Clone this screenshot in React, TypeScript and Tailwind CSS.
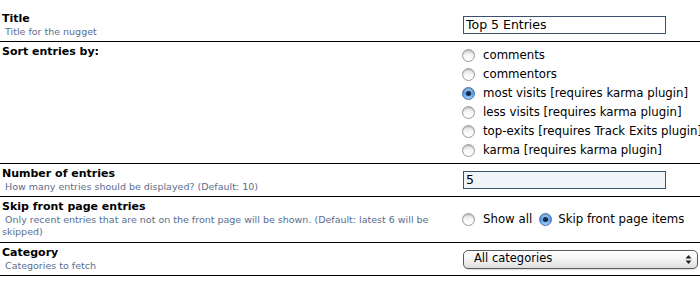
import type { ReactNode } from "react";

const FONT = "font-['DejaVu_Sans',Tahoma,sans-serif]";

const SORT_OPTIONS = [
	{ label: "comments", checked: false },
	{ label: "commentors", checked: false },
	{ label: "most visits [requires karma plugin]", checked: true },
	{ label: "less visits [requires karma plugin]", checked: false },
	{ label: "top-exits [requires Track Exits plugin]", checked: false },
	{ label: "karma [requires karma plugin]", checked: false },
];

function Radio({ checked }: { checked?: boolean }) {
	if (checked) {
		return (
			<span className="flex size-[13px] shrink-0 items-center justify-center rounded-full border border-[#3f6fae] bg-gradient-to-b from-[#a9cdf5] via-[#5d9be4] to-[#9ed0fb] shadow-[inset_0_1px_1px_rgba(0,0,0,0.25)]">
				<span className="size-[5px] rounded-full bg-[#142a4c]" />
			</span>
		);
	}
	return (
		<span className="size-[13px] shrink-0 rounded-full border border-[#9a9a9a] bg-gradient-to-b from-[#d9d9d9] via-[#f7f7f7] to-white shadow-[inset_0_1px_1px_rgba(0,0,0,0.18)]" />
	);
}

function Row({
	label,
	desc,
	children,
	alignTop,
	extraBottom,
}: {
	label: string;
	desc?: ReactNode;
	children: ReactNode;
	alignTop?: boolean;
	extraBottom?: boolean;
}) {
	return (
		<div className="flex border-b border-black">
			<div className={`w-[462px] shrink-0 px-[2px] pt-[3px] ${extraBottom ? "pb-[4px]" : "pb-[3px]"}`}>
				<div className="text-[11px] font-bold leading-[14px] text-black">{label}</div>
				{desc ? (
					<div className="text-[9.5px] leading-[12px] text-[#5a6d8e]">{desc}</div>
				) : null}
			</div>
			<div className={`flex flex-1 ${alignTop ? "items-start pt-[4px]" : "items-center"}`}>
				{children}
			</div>
		</div>
	);
}

export default function App() {
	return (
		<div className={`${FONT} w-[700px] h-[281px] overflow-hidden bg-white pt-[9px] text-black`}>
			<Row label="Title" desc={<span className="pl-[3px]">Title for the nugget</span>}>
				<input
					className="ml-[1px] h-[18px] w-[203px] border border-[#3b4f6e] bg-white px-[2px] text-[12.5px] text-black outline-none"
					defaultValue="Top 5 Entries"
				/>
			</Row>

			<Row label="Sort entries by:" alignTop>
				<div className="flex flex-col pb-[3px]">
					{SORT_OPTIONS.map((opt) => (
						<label key={opt.label} className="flex h-[19px] items-center gap-[8px] text-[11.75px] whitespace-nowrap">
							<Radio checked={opt.checked} />
							<span>{opt.label}</span>
						</label>
					))}
				</div>
			</Row>

			<Row
				label="Number of entries"
				desc={<span className="pl-[3px]">How many entries should be displayed? (Default: 10)</span>}
			>
				<input
					className="ml-[1px] h-[18px] w-[203px] border border-[#3b4f6e] bg-[#f1f4f8] px-[2px] text-[12.5px] text-black outline-none"
					defaultValue="5"
				/>
			</Row>

			<Row
				label="Skip front page entries"
				extraBottom
				desc={
					<>
						<span className="pl-[3px]">
							Only recent entries that are not on the front page will be shown. (Default: latest 6 will be
						</span>
						<br />
						skipped)
					</>
				}
			>
				<div className="flex items-center text-[11.75px] whitespace-nowrap">
					<Radio />
					<span className="ml-[8px]">Show all</span>
					<span className="ml-[7px]">
						<Radio checked />
					</span>
					<span className="ml-[6px]">Skip front page items</span>
				</div>
			</Row>

			<Row label="Category" desc={<span className="pl-[3px]">Categories to fetch</span>}>
				<div className="ml-[1px] flex h-[19px] w-[235px] items-center justify-between rounded-[5px] border border-[#5c5c5c] bg-gradient-to-b from-white via-[#f3f3f3] to-[#dedede] pl-[10px] pr-[5px] text-[11.5px] shadow-[0_1px_1px_rgba(0,0,0,0.15)]">
					<span>All categories</span>
					<svg width="7" height="11" viewBox="0 0 7 11" aria-hidden="true">
						<path d="M3.5 1 L6.5 4.5 L0.5 4.5 Z" fill="#222" />
						<path d="M3.5 10 L6.5 6.5 L0.5 6.5 Z" fill="#222" />
					</svg>
				</div>
			</Row>
		</div>
	);
}
